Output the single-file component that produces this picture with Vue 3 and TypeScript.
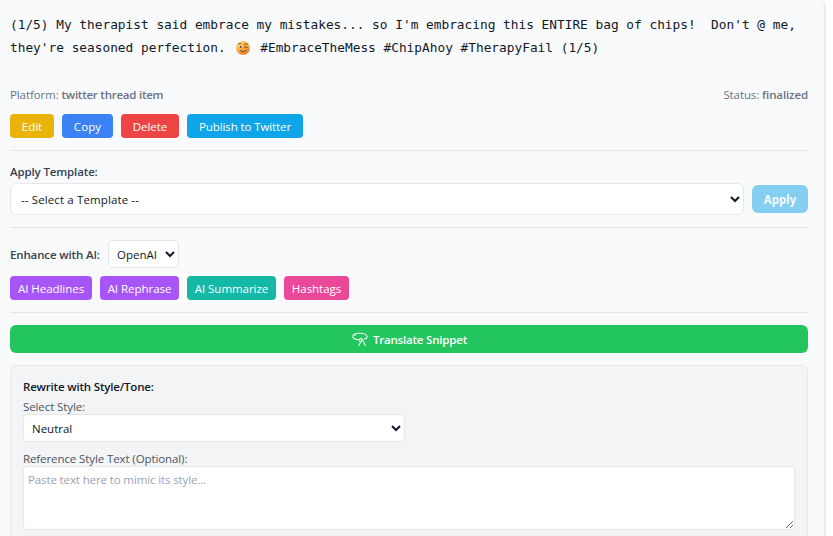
<script setup lang="ts">
import { ref } from 'vue'

interface Action {
  label: string
  kind: string
}

const firstLine = "(1/5) My therapist said embrace my mistakes... so I'm embracing this ENTIRE bag of chips!  Don't @ me,"

const actions: Action[] = [
  { label: 'Edit', kind: 'edit' },
  { label: 'Copy', kind: 'copy' },
  { label: 'Delete', kind: 'delete' },
  { label: 'Publish to Twitter', kind: 'publish' },
]
const aiActions: Action[] = [
  { label: 'AI Headlines', kind: 'headlines' },
  { label: 'AI Rephrase', kind: 'rephrase' },
  { label: 'AI Summarize', kind: 'summarize' },
  { label: 'Hashtags', kind: 'hashtags' },
]

const template = ref('')
const provider = ref('openai')
const tone = ref('neutral')
const styleText = ref('')
</script>

<template>
  <article class="card">
    <div class="snippet">
      <div class="line">{{ firstLine }}</div>
      <div class="line">
        <span>they're seasoned perfection.</span>
        <svg class="wink" viewBox="0 0 16 16" aria-hidden="true">
          <defs>
            <linearGradient id="face" x1="0" y1="0" x2="0.5" y2="1">
              <stop offset="0" stop-color="#ffda65" />
              <stop offset="0.55" stop-color="#fbb540" />
              <stop offset="1" stop-color="#ee8039" />
            </linearGradient>
          </defs>
          <circle cx="8" cy="8" r="7" fill="url(#face)" />
          <ellipse cx="5.1" cy="6.6" rx="1.7" ry="1.8" fill="#fff3d6" />
          <circle cx="5.5" cy="6.8" r="1.1" fill="#493233" />
          <path d="M3.3 4.1 Q4.3 3.3 5.6 3.7 M9.2 4.4 Q10.8 3.1 12.3 4.2 M9.3 7.2 Q11 5.9 12.5 7.3 M5.2 10.7 Q8 13.2 11.2 10.5" fill="none" stroke="#65402e" stroke-width="0.9" stroke-linecap="round" />
        </svg>
        <span>#EmbraceTheMess #ChipAhoy #TherapyFail (1/5)</span>
      </div>
    </div>

    <div class="meta">
      <span>Platform: <b class="platform">twitter thread item</b></span>
      <span>Status: <b>finalized</b></span>
    </div>

    <div class="row">
      <button v-for="a in actions" :key="a.kind" class="btn" :class="a.kind">{{ a.label }}</button>
    </div>

    <section class="template-section">
      <label class="label" for="template">Apply Template:</label>
      <div class="template-row">
        <select id="template" v-model="template" class="template-select">
          <option value="">-- Select a Template --</option>
        </select>
        <button class="apply" disabled>Apply</button>
      </div>
    </section>

    <section class="ai-section">
      <div class="provider-row">
        <label class="label" for="provider">Enhance with AI:</label>
        <select id="provider" v-model="provider" class="provider">
          <option value="openai">OpenAI</option>
        </select>
      </div>
      <div class="row">
        <button v-for="a in aiActions" :key="a.kind" class="btn" :class="a.kind">{{ a.label }}</button>
      </div>
    </section>

    <section class="translate-section">
      <button class="translate">
        <svg class="translate-icon" viewBox="0 0 16 16" aria-hidden="true">
          <path d="M4.8 7.6 C2.2 7.2 .7 6.1 .7 4.6 C.7 2.7 3.7 1.3 7.6 1.3 C11.6 1.3 15.1 2.6 15.1 4.8 C15.1 6 14 6.8 12.4 7.1 M1.2 3.3 C1.8 2.7 2.7 2.7 3.4 3.1 M4.8 7.6 C6.6 7.7 8.2 7.2 9.3 6.2 M10.1 7 L6.9 13.4 M10.1 7 L13.3 13.4 M7.2 8.8 L8.6 10.2" />
        </svg>
        <span>Translate Snippet</span>
      </button>
    </section>

    <section class="rewrite">
      <h4>Rewrite with Style/Tone:</h4>
      <label class="field-label" for="tone">Select Style:</label>
      <select id="tone" v-model="tone" class="tone">
        <option value="neutral">Neutral</option>
      </select>
      <label class="field-label second" for="reference">Reference Style Text (Optional):</label>
      <textarea id="reference" v-model="styleText" placeholder="Paste text here to mimic its style..."></textarea>
    </section>
  </article>
</template>

<style>
body {
  background: #fff;
  overflow: hidden;
}
</style>

<style scoped>
* {
  box-sizing: border-box;
}
.card {
  width: 825px;
  height: 548px;
  padding: 13px 16px 0 10px;
  background: #f9fafc;
  border-right: 1px solid #e5e7eb;
  border-top-right-radius: 6px;
  box-shadow: 0 1px 3px rgba(0, 0, 0, 0.12);
  font-family: "Open Sans", "Noto Sans", sans-serif;
  font-size: 11.5px;
  line-height: 16px;
  color: #111827;
}
.snippet {
  height: 74px;
  font-family: "DejaVu Sans Mono", monospace;
  font-size: 12.8px;
  line-height: 23px;
}
.line {
  display: flex;
  align-items: center;
  height: 23px;
  white-space: pre;
}
.wink {
  width: 16px;
  height: 16px;
  margin: 0 9.5px 0 9px;
}
.meta {
  display: flex;
  justify-content: space-between;
  color: #6b7280;
  letter-spacing: -0.1px;
}
.meta b {
  font-weight: 600;
  letter-spacing: -0.12px;
}
.meta .platform {
  letter-spacing: -0.24px;
}
.row {
  display: flex;
  gap: 8px;
}
.meta + .row {
  margin-top: 11px;
}
button,
select,
textarea {
  margin: 0;
  font-family: inherit;
  font-size: 11.5px;
}
.btn {
  height: 24px;
  padding: 1px 0 0;
  border: 0;
  border-radius: 4px;
  color: #fff;
  line-height: 16px;
  letter-spacing: -0.04px;
  white-space: nowrap;
}
.edit { width: 44px; background: #eab308; }
.copy { width: 51px; background: #3b82f6; letter-spacing: 0.1px; }
.delete { width: 58px; background: #ef4444; }
.publish { width: 116px; background: #0ea5e9; letter-spacing: -0.1px; }
.headlines { width: 82px; background: #a855f7; }
.rephrase { width: 79px; background: #a855f7; }
.summarize { width: 89px; background: #14b8a6; }
.hashtags { width: 65px; background: #ec4899; }
.template-section,
.ai-section,
.translate-section {
  margin-top: 12px;
  padding-top: 12px;
  border-top: 1px solid #e5e7eb;
}
.label {
  color: #374151;
  font-weight: 600;
  letter-spacing: -0.14px;
}
.template-section .label {
  display: block;
  height: 20px;
  padding-top: 1px;
}
.template-row {
  display: flex;
  align-items: center;
  gap: 8px;
}
select {
  background-color: #fff;
  border: 1px solid #e5e7eb;
  border-radius: 4px;
  color: #111827;
}
.template-select {
  flex: 1;
  height: 32px;
  padding: 0 0 0 6px;
  border-radius: 6px;
  letter-spacing: 0.12px;
}
.apply {
  width: 56px;
  height: 28px;
  padding: 1px 0 0;
  border: 0;
  border-radius: 6px;
  background: #84cef2;
  color: #f4faff;
  font-weight: 700;
}
.provider-row {
  display: flex;
  align-items: center;
  height: 28px;
  margin-bottom: 8px;
}
.provider-row .label {
  width: 98px;
  padding-top: 1px;
  white-space: nowrap;
}
.provider {
  width: 71px;
  height: 28px;
  padding: 1px 0 0 4px;
}
.translate {
  display: flex;
  align-items: center;
  justify-content: center;
  gap: 5px;
  width: 100%;
  height: 28px;
  padding: 1px 0 0 1px;
  border: 0;
  border-radius: 6px;
  background: #22c55e;
  color: #fff;
  font-weight: 600;
  letter-spacing: -0.2px;
}
.translate-icon {
  width: 16px;
  height: 16px;
  fill: none;
  stroke: #e9f9ef;
  stroke-width: 1.1;
  stroke-linecap: round;
  stroke-linejoin: round;
}
.rewrite {
  display: flex;
  flex-direction: column;
  align-items: flex-start;
  height: 190px;
  margin-top: 12px;
  padding: 12px;
  background: #f3f4f6;
  border: 1px solid #e5e7eb;
  border-radius: 6px;
}
.rewrite h4 {
  height: 20px;
  margin: 0;
  padding-top: 1px;
  font-size: 11.5px;
  font-weight: 600;
  letter-spacing: -0.18px;
}
.field-label {
  height: 16px;
  padding-top: 1px;
  color: #4b5563;
  letter-spacing: -0.1px;
}
.tone {
  width: 382px;
  height: 28px;
  padding: 1px 0 0 4px;
}
.second {
  margin-top: 8px;
}
textarea {
  width: 100%;
  height: 64px;
  padding: 5px 4px;
  background: #fff;
  border: 1px solid #e5e7eb;
  border-radius: 4px;
  line-height: 16px;
  letter-spacing: -0.12px;
  resize: vertical;
}
textarea::placeholder {
  color: #9ca3af;
}
</style>
